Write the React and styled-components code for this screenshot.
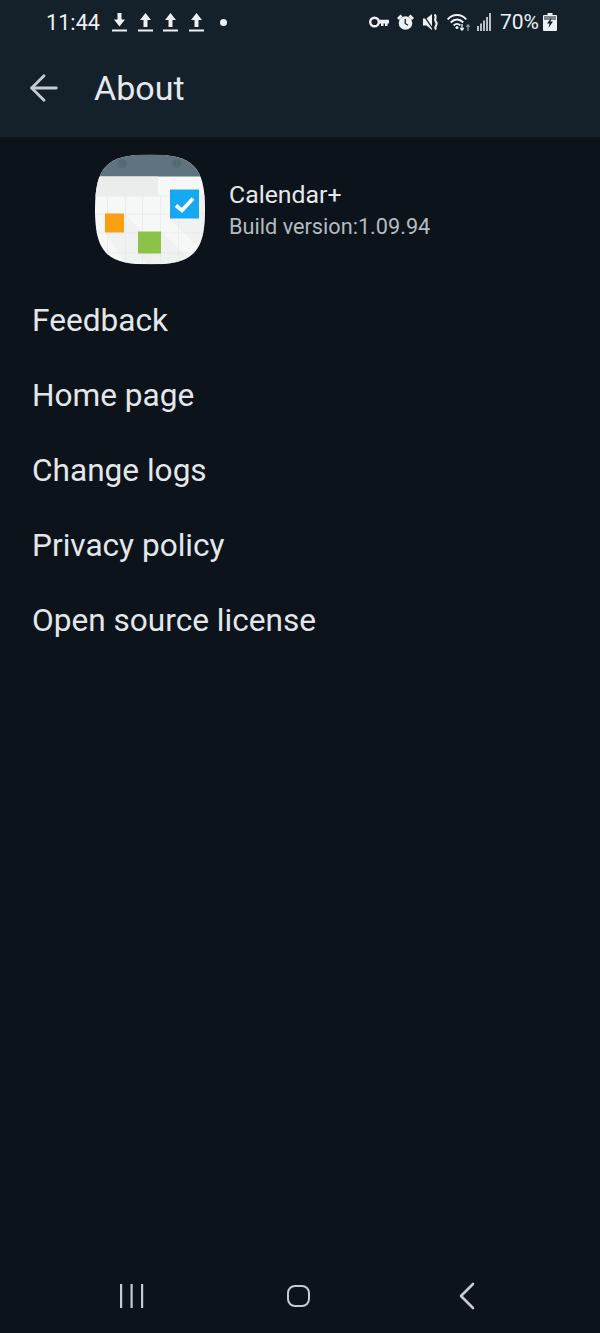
import styled, { createGlobalStyle } from 'styled-components';
import { ArrowLeft, ChevronLeft } from 'lucide-react';

const GlobalStyle = createGlobalStyle`
  html, body {
    margin: 0;
    padding: 0;
    background: #0d131a;
  }
`;

const Page = styled.div`
  width: 600px;
  height: 1333px;
  display: flex;
  flex-direction: column;
  overflow: hidden;
  background: #0d131a;
  font-family: Roboto, "Liberation Sans", sans-serif;
  color: #e6e9ec;
`;

const Header = styled.header`
  height: 137px;
  flex: none;
  background: #14212b;
  display: flex;
  flex-direction: column;
`;

const StatusBar = styled.div`
  height: 44px;
  padding: 0 43px 0 46px;
  display: flex;
  align-items: center;
  color: #eef1f3;
`;

const Clock = styled.span`
  font-size: 21.5px;
  letter-spacing: 0.1px;
  width: 66px;
  flex: none;
`;

const NotifyIcon = styled.svg`
  width: 15px;
  height: 20px;
  margin-right: 10.7px;
  flex: none;
`;

const Dot = styled.span`
  width: 7px;
  height: 7px;
  border-radius: 50%;
  background: #eef1f3;
  margin-left: 5px;
`;

const StatusRight = styled.div`
  margin-left: auto;
  display: flex;
  align-items: center;
`;

const StatusGlyph = styled.svg`
  flex: none;
  width: ${(p) => p.$w}px;
  height: ${(p) => p.$h}px;
  margin-left: ${(p) => p.$gap}px;
`;

const Battery = styled.span`
  font-size: 21px;
  margin-left: 9px;
  width: 39px;
`;

const TitleRow = styled.div`
  flex: 1;
  display: flex;
  align-items: center;
  padding: 0 0 6px 23px;
`;

const BackIcon = styled(ArrowLeft)`
  width: 42px;
  height: 42px;
  color: #c3ccd3;
  margin-right: 29px;
`;

const Title = styled.h1`
  margin: 0;
  font-size: 34px;
  font-weight: 400;
  color: #e6eaee;
`;

const AppRow = styled.section`
  display: flex;
  align-items: center;
  padding: 17px 0 0 95px;
`;

const AppInfo = styled.div`
  margin-left: 24px;
  padding-top: 3px;
`;

const AppName = styled.div`
  font-size: 24.8px;
  line-height: 32px;
  color: #e6e9ec;
`;

const AppBuild = styled.div`
  font-size: 21.7px;
  line-height: 32px;
  color: #b4bbc1;
`;

const Menu = styled.ul`
  list-style: none;
  margin: 18px 0 0;
  padding: 0 0 0 32px;
  flex: 1;
`;

const MenuItem = styled.li`
  height: 75px;
  display: flex;
  align-items: center;
  font-size: 31.6px;
  color: #e4e7ea;
`;

const NavBar = styled.nav`
  height: 74px;
  flex: none;
  display: flex;
  align-items: center;
  padding-left: 119px;
`;

const RecentIcon = styled.svg`
  width: 25px;
  height: 24px;
  flex: none;
`;

const HomeIcon = styled.div`
  width: 19px;
  height: 18px;
  margin: 0 133px 0 143px;
  border: 2.5px solid #c8ccd0;
  border-radius: 8px;
  flex: none;
`;

const NavBack = styled(ChevronLeft)`
  width: 48px;
  height: 48px;
  color: #c8ccd0;
  flex: none;
`;

function DownloadIcon() {
  return (
    <NotifyIcon viewBox="0 0 15 20" fill="#eef1f3">
      <path d="M5.500 1h4v6.500h3.500L7.500 14.500 2 7.500h3.500z" />
      <rect x="0" y="17.500" width="15" height="2" />
    </NotifyIcon>
  );
}

function UploadIcon() {
  return (
    <NotifyIcon viewBox="0 0 15 20" fill="#eef1f3">
      <path d="M5.500 15h4V8h3.500L7.500 1 2 8h3.500z" />
      <rect x="0" y="17.500" width="15" height="2" />
    </NotifyIcon>
  );
}

function KeyIcon() {
  return (
    <StatusGlyph $w={20} $h={12} $gap={0} viewBox="0 0 20 12" fill="none">
      <circle cx="5.500" cy="6" r="4.300" stroke="#eef1f3" strokeWidth="2.400" />
      <path d="M9.500 3.800h10.500v3.700h-1.500V10h-2.500V7.500h-1.500V10h-2.500V7.500H9.500z" fill="#eef1f3" />
    </StatusGlyph>
  );
}

function AlarmIcon() {
  return (
    <StatusGlyph $w={17} $h={16} $gap={8} viewBox="0 0 17 16" fill="#eef1f3">
      <circle cx="8.500" cy="9" r="6.800" />
      <path d="M0 4 3.500 0.500 5.500 2.500 2 6zM17 4 13.500 0.500 11.500 2.500 15 6z" />
      <path d="M8.200 5v4.500l2.800 1.800" stroke="#14212b" strokeWidth="1.300" fill="none" />
    </StatusGlyph>
  );
}

function MuteIcon() {
  return (
    <StatusGlyph $w={15} $h={16} $gap={9} viewBox="0 0 15 16" fill="none">
      <path d="M0 4.500h3.500L9 0v16L3.500 11.500H0z" fill="#eef1f3" />
      <path d="M0.500 1 10 15" stroke="#14212b" strokeWidth="1.300" />
      <path d="M11.500 0.500C14.500 3 10.500 5 13 8S10.500 12 13 15.500" stroke="#eef1f3" strokeWidth="2.100" />
    </StatusGlyph>
  );
}

function WifiIcon() {
  return (
    <StatusGlyph $w={24} $h={18} $gap={9} viewBox="0 0 24 18" fill="none" stroke="#eef1f3" strokeWidth="1.900">
      <path d="M0.700 6.500C5.500 0.500 14.500 0.500 19.300 6.500" />
      <path d="M3.700 9.500C7.500 5.500 12.500 5.500 16.300 9.500" />
      <path d="M6.700 12.500c2-2.200 4.600-2.200 6.600 0" />
      <circle cx="10" cy="14.500" r="1.500" fill="#eef1f3" stroke="none" />
      <path d="M15 11v6M13.300 15l1.700 2.200 1.700-2.200" strokeWidth="1.300" />
      <path d="M21 18v-6M19.300 13.800l1.700-2 1.700 2" stroke="#8b959c" strokeWidth="1.300" />
    </StatusGlyph>
  );
}

function SignalIcon() {
  return (
    <StatusGlyph $w={14} $h={18} $gap={6} viewBox="0 0 14 18" fill="#b9c0c5">
      <rect x="0" y="13" width="2" height="5" />
      <rect x="3" y="10.500" width="2" height="7.500" />
      <rect x="6" y="7.500" width="2" height="10.500" />
      <rect x="9" y="4" width="2" height="14" />
      <rect x="12" y="0" width="2" height="18" />
    </StatusGlyph>
  );
}

function BatteryIcon() {
  return (
    <StatusGlyph $w={14} $h={18} $gap={4} viewBox="0 0 14 18">
      <path d="M4.500 0h5v2h3.500a1 1 0 0 1 1 1v14a1 1 0 0 1-1 1H1a1 1 0 0 1-1-1V3a1 1 0 0 1 1-1h3.500z" fill="#eef1f3" />
      <path d="M1 3h12v4H1z" fill="#7d868c" />
      <path d="M8.500 4.500 4 10.500h2.500l-1 4.500 4.500-6.500H7.500z" fill="#14212b" />
    </StatusGlyph>
  );
}

function CalendarLogo() {
  const squircle = 'M55 0C98 0 110 12 110 55C110 98 98 110 55 110C12 110 0 98 0 55C0 12 12 0 55 0Z';
  const gridX = [12, 30, 47, 65, 83];
  const gridY = [41, 59, 78, 98];
  return (
    <svg width="110" height="111" viewBox="0 0 110 110" style={{ flex: 'none' }}>
      <defs>
        <clipPath id="logoClip">
          <path d={squircle} />
        </clipPath>
      </defs>
      <g clipPath="url(#logoClip)">
        <rect width="110" height="110" fill="#f6f7f7" />
        <rect width="110" height="22" fill="#5f747e" />
        <circle cx="27" cy="9" r="4.500" fill="#566a74" />
        <circle cx="82" cy="9" r="4.500" fill="#566a74" />
        <rect y="22" width="63" height="19" fill="#ebecec" />
        {gridX.map((x) => (
          <rect key={x} x={x} y="41" width="1" height="69" fill="#ebecec" />
        ))}
        {gridY.map((y) => (
          <rect key={y} y={y} width="110" height="1" fill="#ebecec" />
        ))}
        <path d="M10 78 29 59 64 94 43 110H32z" fill="#e8e9e9" opacity="0.45" />
        <path d="M43 99 66 77 100 110H54z" fill="#e8e9e9" opacity="0.5" />
        <path d="M75 64 104 35 110 41V100z" fill="#e8e9e9" opacity="0.45" />
        <rect x="10" y="59" width="19" height="19" fill="#fb9f12" />
        <rect x="43" y="77" width="23" height="22" fill="#8bc34a" />
        <rect x="75" y="35" width="29" height="29" fill="#16a9f1" />
        <path d="M81 51 87 56 98 44" fill="none" stroke="#fff" strokeWidth="3.800" />
      </g>
    </svg>
  );
}

export default function App() {
  const items = ['Feedback', 'Home page', 'Change logs', 'Privacy policy', 'Open source license'];
  return (
    <Page>
      <GlobalStyle />
      <Header>
        <StatusBar>
          <Clock>11:44</Clock>
          <DownloadIcon />
          <UploadIcon />
          <UploadIcon />
          <UploadIcon />
          <Dot />
          <StatusRight>
            <KeyIcon />
            <AlarmIcon />
            <MuteIcon />
            <WifiIcon />
            <SignalIcon />
            <Battery>70%</Battery>
            <BatteryIcon />
          </StatusRight>
        </StatusBar>
        <TitleRow>
          <BackIcon strokeWidth={1.6} />
          <Title>About</Title>
        </TitleRow>
      </Header>
      <AppRow>
        <CalendarLogo />
        <AppInfo>
          <AppName>Calendar+</AppName>
          <AppBuild>Build version:1.09.94</AppBuild>
        </AppInfo>
      </AppRow>
      <Menu>
        {items.map((item) => (
          <MenuItem key={item}>{item}</MenuItem>
        ))}
      </Menu>
      <NavBar>
        <RecentIcon viewBox="0 0 25 24" fill="#c8ccd0">
          <rect x="1" y="0" width="2.200" height="24" />
          <rect x="11.500" y="0" width="2.200" height="24" />
          <rect x="22" y="0" width="2.200" height="24" />
        </RecentIcon>
        <HomeIcon />
        <NavBack strokeWidth={1.3} />
      </NavBar>
    </Page>
  );
}
